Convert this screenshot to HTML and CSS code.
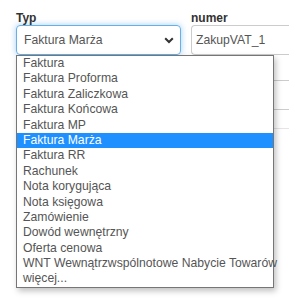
FILE: index.html
```html
<!DOCTYPE html>
<html lang="pl">
<head>
  <meta charset="UTF-8">
  <title>Dokument</title>
  <link rel="stylesheet" href="styles.css">
</head>
<body>

  <div class="form">
    <div class="row">
      <div class="field field-typ">
        <label class="label">Typ</label>
        <div class="select focused">
          <span class="select-value">Faktura Marża</span>
          <svg class="chevron" width="10" height="7" viewBox="0 0 10 7">
            <path d="M1.2 1.2 L5 5 L8.8 1.2" fill="none" stroke="#333" stroke-width="2"/>
          </svg>
        </div>
      </div>
      <div class="field field-numer">
        <label class="label">numer</label>
        <div class="input">ZakupVAT_1</div>
      </div>
    </div>

    <!-- second row, mostly hidden under the open list -->
    <div class="row row-second">
      <div class="input input-blank"></div>
    </div>
    <div class="divider"></div>

    <!-- open dropdown list -->
    <ul class="options">
      <li>Faktura</li>
      <li>Faktura Proforma</li>
      <li>Faktura Zaliczkowa</li>
      <li>Faktura Końcowa</li>
      <li>Faktura MP</li>
      <li class="selected">Faktura Marża</li>
      <li>Faktura RR</li>
      <li>Rachunek</li>
      <li>Nota korygująca</li>
      <li>Nota księgowa</li>
      <li>Zamówienie</li>
      <li>Dowód wewnętrzny</li>
      <li>Oferta cenowa</li>
      <li>WNT Wewnątrzwspólnotowe Nabycie Towarów</li>
      <li>więcej...</li>
    </ul>
  </div>

</body>
</html>
```

FILE: styles.css
```css
* {
  box-sizing: border-box;
  margin: 0;
  padding: 0;
}

body {
  font-family: "Liberation Sans", Arial, sans-serif;
  background-color: #fff;
  color: #555;
}

.form {
  position: relative;
  height: 302px;
  overflow: hidden;
  padding: 11px 0 0 16px;
}

.row {
  display: flex;
  gap: 10px;
}

.field-typ {
  width: 165px;
  flex-shrink: 0;
}

.field-numer {
  flex: 1;
  min-width: 120px;
}

.label {
  display: block;
  font-size: 12px;
  font-weight: bold;
  color: #333;
  height: 14px;
  line-height: 14px;
}

.select,
.input {
  height: 30px;
  border: 1px solid #ccc;
  border-radius: 4px;
  font-size: 12.2px;
  color: #555;
  display: flex;
  align-items: center;
  padding: 0 7px;
}

.select {
  justify-content: space-between;
  padding-right: 6px;
}

.select.focused {
  border-color: #66afe9;
  box-shadow: 0 0 6px rgba(102, 175, 233, 0.6);
}

.input {
  border-right: none;
  border-radius: 4px 0 0 4px;
  padding-left: 4px;
}

.row-second {
  margin-top: 25px;
  padding-left: 175px;
}

.input-blank {
  flex: 1;
}

.divider {
  margin-top: 18px;
  border-top: 1px solid #e5e5e5;
}

/* open list */
.options {
  position: absolute;
  top: 55px;
  left: 16px;
  width: 258px;
  list-style: none;
  background: #fff;
  border: 1px solid #767676;
  box-shadow: 2px 3px 6px rgba(0, 0, 0, 0.25);
  font-size: 12.2px;
  color: #555;
}

.options li {
  height: 15.4px;
  line-height: 15px;
  padding-left: 6px;
  white-space: nowrap;
}

.options li.selected {
  background-color: #1e90ff;
  color: #fff;
}
```
